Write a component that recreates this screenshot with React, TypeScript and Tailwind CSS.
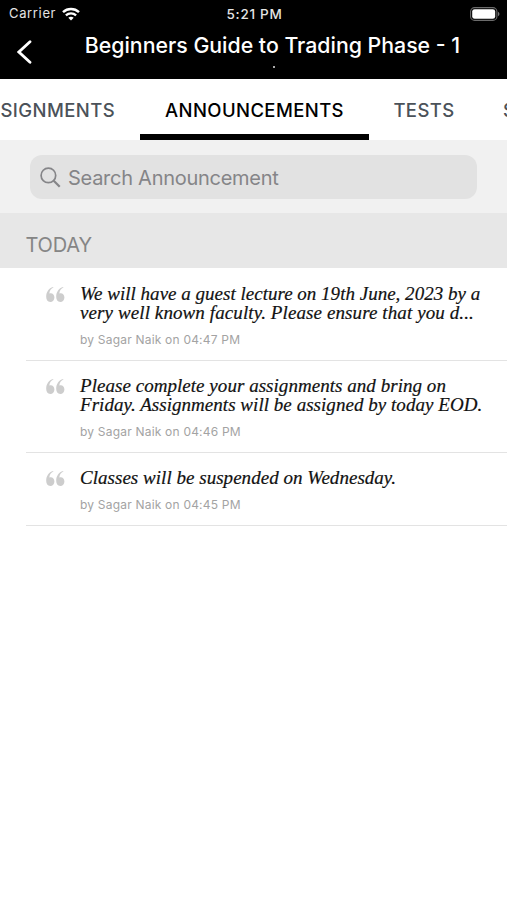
import clsx from "clsx";

type Line = {
  text: string;
  className: string;
};

type Announcement = {
  lines: Line[];
  author: string;
  time: string;
};

const announcements: Announcement[] = [
  {
    lines: [
      {
        text: "We will have a guest lecture on 19th June, 2023 by a",
        className: "tracking-[0.01px]",
      },
      {
        text: "very well known faculty. Please ensure that you d...",
        className: "tracking-[0.1px]",
      },
    ],
    author: "Sagar Naik",
    time: "04:47 PM",
  },
  {
    lines: [
      {
        text: "Please complete your assignments and bring on",
        className: "tracking-[0.04px]",
      },
      {
        text: "Friday. Assignments will be assigned by today EOD.",
        className: "tracking-[0.04px]",
      },
    ],
    author: "Sagar Naik",
    time: "04:46 PM",
  },
  {
    lines: [
      {
        text: "Classes will be suspended on Wednesday.",
        className: "tracking-[0.03px]",
      },
    ],
    author: "Sagar Naik",
    time: "04:45 PM",
  },
];

function StatusBar() {
  return (
    <div className="grid grid-cols-3 items-center h-7 pl-[9px] pr-[7px] text-[13px] text-[#e4e4e4]">
      <div className="flex items-center gap-[6px]">
        <span className="tracking-[0.65px]">Carrier</span>
        <svg width="18" height="14" viewBox="0 0 18 14" fill="none">
          <path
            d="M1 5.1C5.6.9 12.4.9 17 5.1"
            stroke="white"
            strokeWidth="2.5"
          />
          <path
            d="M3.9 8.3c2.9-2.6 7.3-2.6 10.2 0"
            stroke="white"
            strokeWidth="2.4"
          />
          <path d="M6.3 10.8c1.6-1.4 3.8-1.4 5.4 0L9 13.6z" fill="white" />
        </svg>
      </div>
      <span className="text-center text-[13.5px] font-medium whitespace-nowrap tracking-[0.7px]">
        5:21 PM
      </span>
      <div className="flex items-center justify-end">
        <svg width="30" height="14" viewBox="0 0 30 14">
          <rect
            x="0.6"
            y="0.6"
            width="26.3"
            height="12.8"
            rx="4"
            fill="none"
            stroke="#6b6b6b"
            strokeWidth="1.1"
          />
          <rect x="2.2" y="2.2" width="23" height="9.6" rx="2.4" fill="white" />
          <path d="M28 4.8c2 .9 2 3.5 0 4.4z" fill="#777" />
        </svg>
      </div>
    </div>
  );
}

function Header() {
  return (
    <header className="h-[79px] bg-black text-white">
      <StatusBar />
      <div className="flex h-[51px]">
        <button className="w-[84px] pl-[17px] pt-3 flex items-start">
          <svg width="15" height="24" viewBox="0 0 15 24" fill="none">
            <path
              d="M13 1.7 1.9 12 13 22.3"
              stroke="white"
              strokeWidth="2.8"
              strokeLinecap="round"
            />
          </svg>
        </button>
        <div className="w-[377px] flex flex-col items-center">
          <h1 className="mt-[3px] text-[21.3px] leading-7 font-medium whitespace-nowrap">
            Beginners Guide to Trading Phase - 1
          </h1>
          <span className="ml-[2px] mt-[7px] size-[2px] bg-[#aaa]" />
        </div>
      </div>
    </header>
  );
}

function Tabs() {
  return (
    <nav className="flex h-[61px] overflow-hidden bg-white text-[18.5px] font-medium tracking-[0.4px] text-[#4b5259] whitespace-nowrap">
      <div className="w-[140px] shrink-0 flex items-center justify-end pt-[2px] pr-[25px]">
        <span>ASSIGNMENTS</span>
      </div>
      <div className="w-[229px] shrink-0 flex items-center justify-center border-b-[6px] border-black pt-2 text-black">
        <span>ANNOUNCEMENTS</span>
      </div>
      <div className="w-[110px] shrink-0 flex items-center justify-center pt-[2px]">
        <span>TESTS</span>
      </div>
      <div className="shrink-0 flex items-center pl-6 pt-[2px]">
        <span>SCHEDULE</span>
      </div>
    </nav>
  );
}

function SearchBar() {
  return (
    <div className="h-[73px] bg-[#f1f1f1] px-[30px] pt-[15px]">
      <div className="flex h-11 items-center rounded-xl bg-[#e2e2e2] pl-[10px] text-[#858588]">
        <svg width="21" height="21" viewBox="0 0 21 21" fill="none">
          <circle cx="8.4" cy="8.4" r="7.3" stroke="currentColor" strokeWidth="1.7" />
          <path d="m13.7 13.7 6 6" stroke="currentColor" strokeWidth="2.2" />
        </svg>
        <span className="ml-[7px] pt-px text-[20px] whitespace-nowrap tracking-[-0.27px]">
          Search Announcement
        </span>
      </div>
    </div>
  );
}

function QuoteIcon() {
  return (
    <svg width="19" height="16" viewBox="0 0 19 16" fill="#cdcdcd">
      <path d="M7.4.5C5 1.7 3.6 3.6 3.3 6.4c3-.8 5.1 1.1 5.1 4 0 2.6-1.7 4.5-4.1 4.5C1.6 14.9.2 12.8.2 9.8.2 5.1 2.8 1.3 7.2.1z" />
      <path d="M17.4.5C15 1.7 13.6 3.6 13.3 6.4c3-.8 5.1 1.1 5.1 4 0 2.6-1.7 4.5-4.1 4.5-2.7 0-4.1-2.1-4.1-5.1 0-4.7 2.6-8.5 7-9.7z" />
    </svg>
  );
}

function AnnouncementRow({ lines, author, time }: Announcement) {
  return (
    <li className="ml-[26px] flex border-b border-[#e3e3e3] pt-[15px] pb-3">
      <div className="w-[54px] shrink-0 pl-5 pt-[3px]">
        <QuoteIcon />
      </div>
      <div>
        {lines.map((line) => (
          <p
            key={line.text}
            className={clsx(
              "h-[19px] font-['Liberation_Serif',serif] text-[19px] leading-[19px] italic text-[#111] whitespace-nowrap [-webkit-text-stroke:0.2px_#111]",
              line.className
            )}
          >
            {line.text}
          </p>
        ))}
        <p className="mt-[10px] h-4 text-[12px] leading-4 tracking-[0.2px] text-[#a3a3a3]">
          by {author} on {time}
        </p>
      </div>
    </li>
  );
}

export default function App() {
  return (
    <div className="h-[900px] w-[507px] overflow-hidden bg-white font-['Inter',sans-serif]">
      <Header />
      <Tabs />
      <SearchBar />
      <h2 className="flex h-[55px] items-center bg-[#e7e7e7] pl-[25.5px] pt-2 text-[20px] tracking-[-0.2px] text-[#858585]">
        TODAY
      </h2>
      <ul className="pt-px">
        {announcements.map((announcement) => (
          <AnnouncementRow key={announcement.time} {...announcement} />
        ))}
      </ul>
    </div>
  );
}
